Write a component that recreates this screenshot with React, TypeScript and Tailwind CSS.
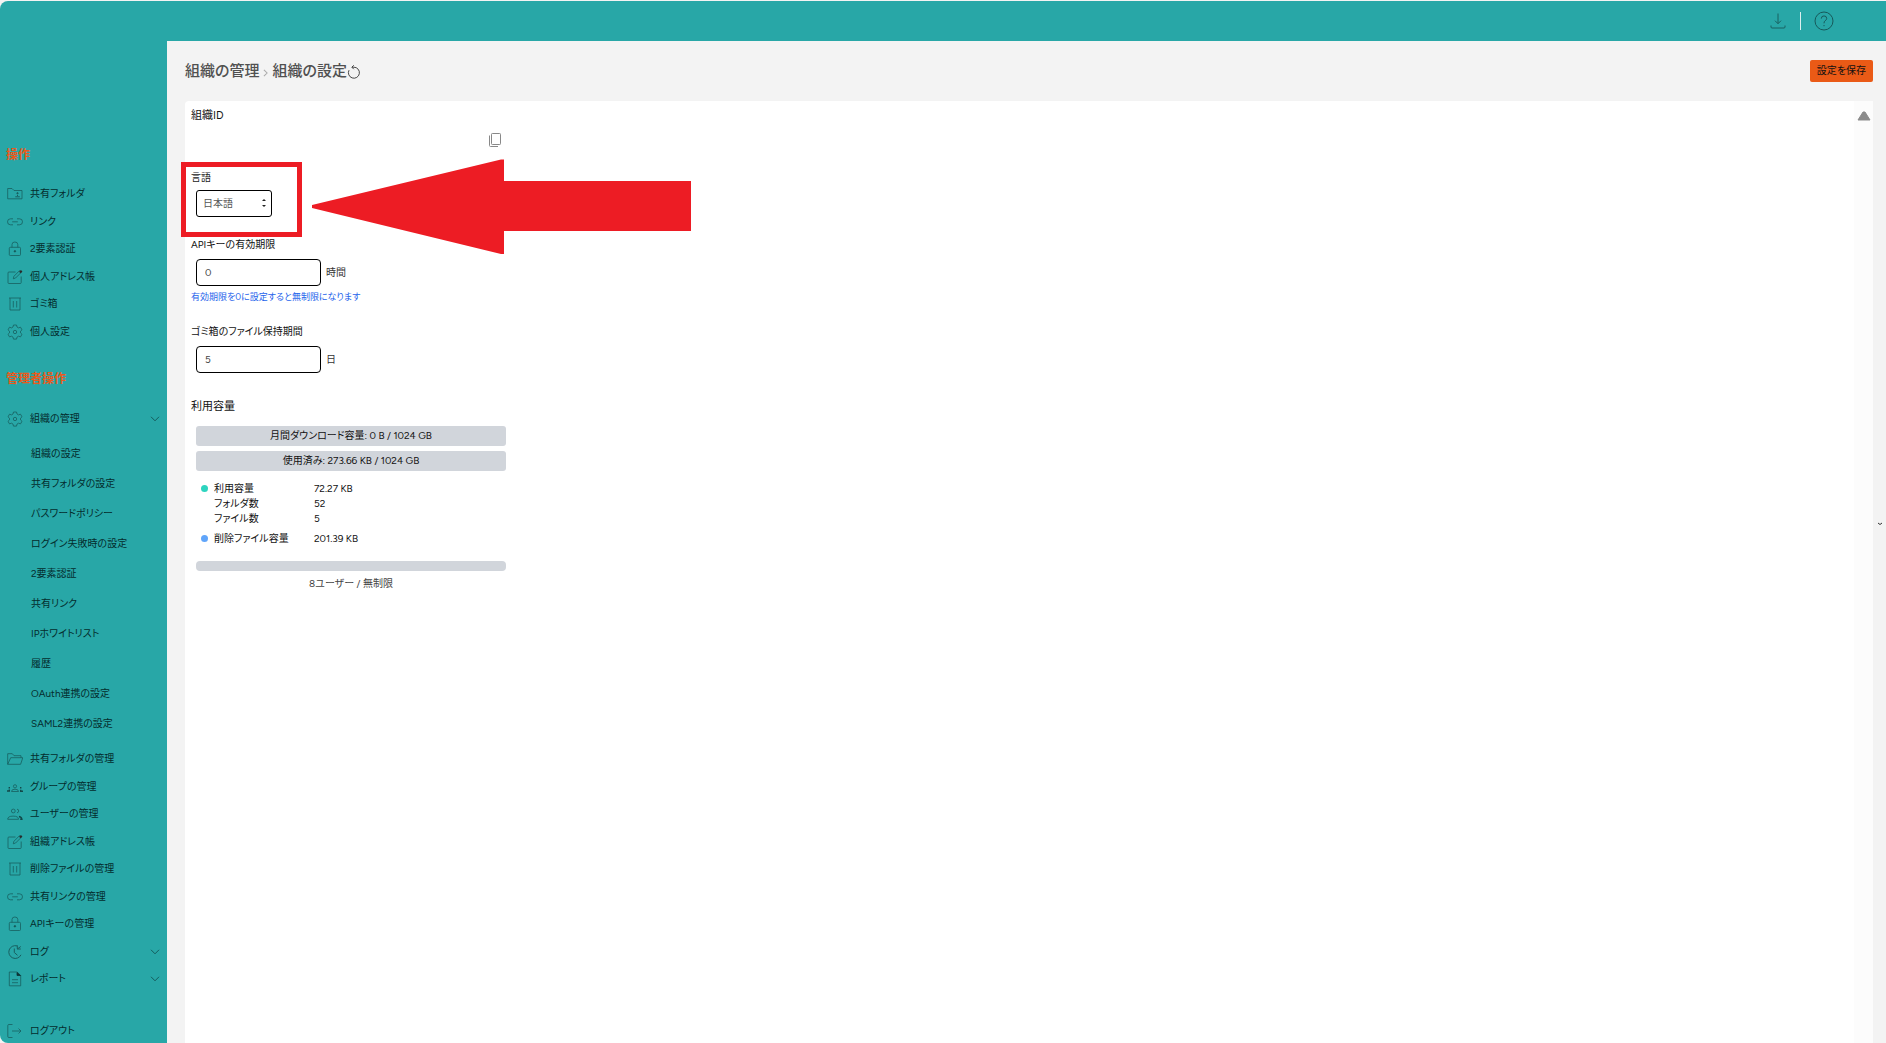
import React from "react";

type IconName =
  | "sharedFolder" | "link" | "lock" | "edit" | "trash" | "gear" | "folder"
  | "group" | "users" | "history" | "report" | "logout";

const iconShapes: Record<IconName, React.ReactNode> = {
  sharedFolder: (
    <>
      <path d="M.7 12.8V2.500H5l2 2h8v8.300H.7Z" />
      <path d="M8.300 10.800h4.500M10.500 9v1" strokeWidth="1" />
      <circle cx="10.500" cy="7.300" r=".7" fill="currentColor" />
    </>
  ),
  link: (
    <>
      <path d="M6 4.800H3.500a3 3 0 0 0 0 6H6M10 4.800h2.500a3 3 0 0 1 0 6H10" />
      <path d="M5.200 7.800h5.600" />
    </>
  ),
  lock: (
    <>
      <rect x="2.300" y="6.300" width="11.200" height="8.200" rx="1" />
      <path d="M5 6.300V3.500Q5 1 7.900 1t2.900 2.500v2.800" />
      <circle cx="7.900" cy="10.300" r=".8" fill="#0b3435" />
    </>
  ),
  edit: (
    <>
      <path d="M8.500 3H1.900Q1 3 1 4v9.600q0 .9.900.9h11.400q.900 0 .9-.9V7.500" />
      <path d="m6.300 9.800.6-2.500 5.700-5.700 1.700 1.700L8.600 9Z" />
      <path d="m13 1.800 1.500 1.500" stroke="#2b2b2b" strokeWidth="2.600" />
    </>
  ),
  trash: (
    <>
      <path d="M2 2h12M3 2v12h10V2" />
      <path d="M6.300 5v6.500M9.700 5v6.500" />
    </>
  ),
  gear: (
    <>
      <path d="M6.500 1h3l.5 2 1.500.9 2-.7 1.500 2.600-1.500 1.400v1.700l1.500 1.400-1.500 2.600-2-.7-1.500.9-.5 2h-3L6 13.100l-1.500-.9-2 .7L1 10.300l1.500-1.400V7.200L1 5.800l1.500-2.600 2 .7L6 3Z" />
      <circle cx="8" cy="8" r="1.700" />
    </>
  ),
  folder: (
    <>
      <path d="M.700 13.300V2.700h4.600l1.700 2h7v2" />
      <path d="M.700 13.300 3.700 6.700h12.100l-2.200 6.600Z" />
    </>
  ),
  group: (
    <>
      <circle cx="8" cy="7.300" r="1.600" />
      <path d="M4.500 12.500q0-2.300 3.500-2.300t3.500 2.300Z" />
      <path d="M2.300 8v1.500M13.700 8v1.500M0 12h2.300v-1.500M16 12.200h-2.300v-1.500" stroke="#12494a" strokeWidth="1.400" />
    </>
  ),
  users: (
    <>
      <circle cx="6.300" cy="5" r="1.900" />
      <path d="M10 3.200q1.900.2 1.700 1.900-.1 1.500-1.700 1.700" />
      <path d="M.7 13.300q0-3.200 5.400-3.200t5.400 3.200Z" />
      <path d="M12 10.500q2.700.7 2.900 2.800h-1.700" stroke="#12494a" strokeWidth="1.400" />
    </>
  ),
  history: (
    <>
      <path d="M10 1.900A6.400 6.400 0 1 0 14 10.800" strokeWidth="1" />
      <path d="M7.300 4.500v4l3.200 2.800M10.300 5h3.500M13.800 2.500 10.300 5V1.300" strokeWidth="1" />
    </>
  ),
  report: (
    <>
      <path d="M2.300 1h7.900l3.500 3.500v10.300H2.300Z" />
      <path d="M10 1.500v3h3.500Z" fill="#0b3435" stroke="#0b3435" />
      <path d="M5 8.700h6M5 11.700h6" />
    </>
  ),
  logout: (
    <>
      <path d="M5.500 1.500H1.800q-1 0-1 1v11q0 1 1 1h3.700" />
      <path d="M5 8h9M11.500 5.500 14 8l-2.500 2.500" />
    </>
  ),
};

function Icon({ name }: { name: IconName }) {
  return (
    <svg viewBox="0 0 16 16" className="size-4 shrink-0 text-[#185f60]" fill="none" stroke="currentColor" strokeWidth=".8" aria-hidden="true">
      {iconShapes[name]}
    </svg>
  );
}

function Chevron() {
  return (
    <svg viewBox="0 0 10 6" className="mr-[7px] ml-auto h-[6px] w-[10px] text-[#10494a]" fill="none" stroke="currentColor" strokeWidth=".8" aria-hidden="true">
      <path d="m1 .8 4 4 4-4" />
    </svg>
  );
}

type Item = { icon: IconName; label: string; open?: boolean };

const userItems: Item[] = [
  { icon: "sharedFolder", label: "共有フォルダ" },
  { icon: "link", label: "リンク" },
  { icon: "lock", label: "2要素認証" },
  { icon: "edit", label: "個人アドレス帳" },
  { icon: "trash", label: "ゴミ箱" },
  { icon: "gear", label: "個人設定" },
];

const settingItems = [
  "組織の設定", "共有フォルダの設定", "パスワードポリシー", "ログイン失敗時の設定", "2要素認証",
  "共有リンク", "IPホワイトリスト", "履歴", "OAuth連携の設定", "SAML2連携の設定",
];

const adminItems: Item[] = [
  { icon: "folder", label: "共有フォルダの管理" },
  { icon: "group", label: "グループの管理" },
  { icon: "users", label: "ユーザーの管理" },
  { icon: "edit", label: "組織アドレス帳" },
  { icon: "trash", label: "削除ファイルの管理" },
  { icon: "link", label: "共有リンクの管理" },
  { icon: "lock", label: "APIキーの管理" },
  { icon: "history", label: "ログ", open: false },
  { icon: "report", label: "レポート", open: false },
];

function NavLink({ item }: { item: Item }) {
  if (item.open !== undefined) {
    return (
      <button type="button" aria-expanded={item.open} className="flex h-full w-full items-center gap-[7px] pl-[7px] text-left">
        <Icon name={item.icon} />
        {item.label}
        <Chevron />
      </button>
    );
  }
  return (
    <a href="#" className="flex h-full items-center gap-[7px] pl-[7px]">
      <Icon name={item.icon} />
      {item.label}
    </a>
  );
}

function NavList({ items }: { items: Item[] }) {
  return (
    <ul>
      {items.map((item) => (
        <li key={item.label} className="odd:h-7 even:h-[27px]">
          <NavLink item={item} />
        </li>
      ))}
    </ul>
  );
}

function Sidebar() {
  return (
    <nav className="w-[167px] shrink-0 rounded-bl-lg bg-[#28a7a7] pt-[105px] text-[#042c2d]">
      <h2 className="mb-4 pl-[6px] text-xs leading-[18px] font-bold text-[#ea5a1c]">操作</h2>
      <NavList items={userItems} />
      <h2 className="mt-[25px] mb-[17px] pl-[6px] text-xs leading-[18px] font-bold text-[#ea5a1c]">管理者操作</h2>
      <div className="h-7">
        <NavLink item={{ icon: "gear", label: "組織の管理", open: true }} />
      </div>
      <ul className="mt-[6px] mb-[6px]">
        {settingItems.map((label) => (
          <li key={label}>
            <a href="#" className="flex h-[30px] items-center pl-[31px]">{label}</a>
          </li>
        ))}
      </ul>
      <NavList items={adminItems} />
      <div className="mt-[26px] h-6">
        <NavLink item={{ icon: "logout", label: "ログアウト" }} />
      </div>
    </nav>
  );
}

function TopBar() {
  return (
    <header className="flex h-10 items-center justify-end rounded-tl-lg bg-[#28a7a7] pr-[52px] text-[#17595a]">
      <button type="button" aria-label="ダウンロード">
        <svg viewBox="0 0 16 16" className="size-4" fill="none" stroke="currentColor" strokeWidth=".9">
          <path d="M8 .5v10M5 7.700l3 3 3-3M1 12.500v1.500q0 1 1 1h12q1 0 1-1v-1.500" />
        </svg>
      </button>
      <span className="mr-[13px] ml-[14px] h-[18px] w-px bg-[#dcefef]" />
      <button type="button" aria-label="ヘルプ">
        <svg viewBox="0 0 20 20" className="size-5" fill="none" stroke="currentColor" strokeWidth="1">
          <circle cx="10" cy="10" r="9" />
          <path d="M7.300 7.600q0-2.700 2.700-2.700t2.700 2.500q0 1.400-1.500 2.300Q10 10.400 10 12.300M10 14v1.200" />
        </svg>
      </button>
    </header>
  );
}

function NumberField({ id, label, value, unit }: { id: string; label: string; value: string; unit: string }) {
  return (
    <>
      <label htmlFor={id} className="block leading-4">{label}</label>
      <div className="mt-[6px] ml-[5px] flex items-center gap-[5px]">
        <input id={id} type="text" inputMode="numeric" defaultValue={value} className="h-[27px] w-[125px] rounded border border-black bg-white px-2 text-[#444]" />
        <span className="text-[#333]">{unit}</span>
      </div>
    </>
  );
}

function UsageRow({ label, value, dot }: { label: string; value: string; dot: string }) {
  return (
    <div className="flex h-[15px] items-center">
      <span className={`mr-[6px] size-[7px] rounded-full ${dot}`} />
      <dt className="w-[100px]">{label}</dt>
      <dd>{value}</dd>
    </div>
  );
}

function LanguageField() {
  return (
    <div className="relative mt-[22px]">
      <label htmlFor="language" className="block leading-4 text-[#222]">言語</label>
      <div className="relative mt-[4px] ml-[5px] w-[76px]">
        <select id="language" defaultValue="ja" className="block h-[27px] w-full appearance-none rounded-[3px] border border-black bg-white pl-[6px] text-[#555]">
          <option value="ja">日本語</option>
        </select>
        <svg viewBox="0 0 6 10" className="pointer-events-none absolute top-[8px] right-[5px] h-[10px] w-[6px]" fill="#222" aria-hidden="true">
          <path d="M1 3 3 1l2 2ZM1 7l2 2 2-2Z" />
        </svg>
      </div>
      <div className="pointer-events-none absolute -top-2 -left-[10px] h-[75px] w-[121px] border-[5px] border-[#ed1c24]" />
      <svg viewBox="0 0 380 96" className="pointer-events-none absolute -top-[11px] left-[120px] h-24 w-[380px]" fill="#ed1c24" aria-hidden="true">
        <path d="M1 46 190 .5l3 0V22H380V72H193V95h-3L1 49Z" />
      </svg>
    </div>
  );
}

function SettingsPanel() {
  return (
    <section className="flex flex-1 rounded-tl-sm bg-white">
      <div className="min-w-0 flex-1 pt-[7px] pl-[6px]">
        <h2 className="text-[11px] leading-4">組織ID</h2>
        <div className="mt-[8px] flex w-[310px] justify-end">
          <button type="button" aria-label="コピー">
            <svg viewBox="0 0 12 16" className="h-4 w-3" fill="none" stroke="#888" strokeWidth="1">
              <rect x="2.500" y="1.500" width="9" height="11" rx=".8" />
              <path d="M.5 3.500v10q0 1 1 1H9" />
            </svg>
          </button>
        </div>
        <LanguageField />
        <div className="mt-[20px]">
          <NumberField id="api-expiry" label="APIキーの有効期限" value="0" unit="時間" />
          <p className="mt-[3px] text-[9px] leading-4 text-[#2563eb]">有効期限を0に設定すると無制限になります</p>
        </div>
        <div className="mt-[19px]">
          <NumberField id="trash-days" label="ゴミ箱のファイル保持期間" value="5" unit="日" />
        </div>
        <h2 className="mt-[26px] text-[11px] leading-4">利用容量</h2>
        <div className="mt-[11px] ml-[5px] w-[310px]">
          <div className="rounded-[3px] bg-[#d1d5db] text-center leading-5">月間ダウンロード容量: 0 B / 1024 GB</div>
          <div className="mt-[5px] rounded-[3px] bg-[#d1d5db] text-center leading-5">使用済み: 273.66 KB / 1024 GB</div>
          <dl className="mt-[10px] pl-[5px]">
            <UsageRow label="利用容量" value="72.27 KB" dot="bg-[#2dd4bf]" />
            <UsageRow label="フォルダ数" value="52" dot="bg-transparent" />
            <UsageRow label="ファイル数" value="5" dot="bg-transparent" />
            <div className="h-[5px]" />
            <UsageRow label="削除ファイル容量" value="201.39 KB" dot="bg-[#60a5fa]" />
          </dl>
          <div className="mt-[15px] h-[10px] rounded bg-[#d1d5db]" />
          <p className="mt-[5px] text-center leading-4 text-[#444]">8ユーザー / 無制限</p>
        </div>
      </div>
      <div className="w-[19px] shrink-0 bg-[#fcfcfc] pt-[10px]">
        <svg viewBox="0 0 14 10" className="mx-auto h-[10px] w-[14px]" fill="#8b8b8b" stroke="#8b8b8b" strokeLinejoin="round" aria-hidden="true">
          <path d="M6 1h2l5 8H1Z" />
        </svg>
      </div>
    </section>
  );
}

export default function App() {
  return (
    <div className="relative flex min-h-screen flex-col bg-[#f3f3f3] pt-px font-['Figtree','Noto_Sans','Noto_Sans_CJK_JP',sans-serif] text-[10px] leading-4 text-[#111] [font-feature-settings:'palt']">
      <TopBar />
      <div className="flex flex-1">
        <Sidebar />
        <main className="flex min-w-0 flex-1 flex-col pr-[13px] pl-[18px]">
          <div className="flex h-[60px] items-center justify-between">
            <h1 className="flex items-center text-[15px] font-medium text-[#505050]">
              組織の管理
              <svg viewBox="0 0 6 10" className="mx-1 mt-1 h-[8px] w-[5px]" fill="none" stroke="#aaa" strokeWidth="1.300" aria-hidden="true">
                <path d="m1 1 4 4-4 4" />
              </svg>
              組織の設定
              <button type="button" aria-label="再読み込み" className="mt-[2px]">
                <svg viewBox="0 0 14 14" className="block size-[14px]" fill="none" stroke="#333" strokeWidth=".9">
                  <path d="M2 5.200A5.500 5.500 0 1 0 7 2.200H5M6.800.3 4.800 2.200l2 2" />
                </svg>
              </button>
            </h1>
            <button type="button" className="h-[22px] rounded-[2px] bg-[#ea5a16] px-[7px]">設定を保存</button>
          </div>
          <SettingsPanel />
        </main>
      </div>
      <svg viewBox="0 0 6 4" className="absolute top-1/2 right-[3px] h-1 w-[6px]" fill="none" stroke="#333" aria-hidden="true">
        <path d="m1 1 2 1.500L5 1" />
      </svg>
    </div>
  );
}
